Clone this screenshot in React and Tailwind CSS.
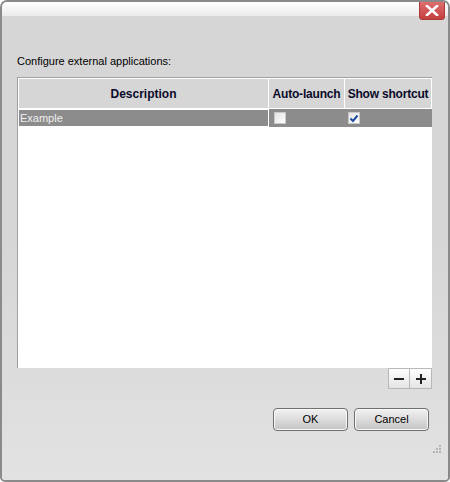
import { useState } from 'react';

const CheckBox = ({ checked }) => (
  <div className="w-[12px] h-[12px] border border-[#c8c8c8] bg-gradient-to-br from-[#e4e4e4] to-white flex items-center justify-center">
    {checked && (
      <svg width="10" height="9" viewBox="0 0 10 9">
        <path d="M1.5 4.5 L4 7 L8.5 1.5" fill="none" stroke="#1a4f9c" strokeWidth="2" />
      </svg>
    )}
  </div>
);

const App = () => {
  const [rows] = useState([{ name: 'Example', auto: false, shortcut: true }]);

  return (
    <div className="w-[450px] h-[482px] bg-white" style={{ fontFamily: '"Liberation Sans", Arial, sans-serif' }}>
      <div className="relative w-full h-full border-2 border-[#8a8a8a] rounded-t-[7px] rounded-b-[5px] overflow-hidden bg-[#d6d6d6] flex flex-col">
        {/* Title bar */}
        <div className="h-[14px] bg-gradient-to-b from-white to-[#ebebeb] shrink-0" />

        {/* Close button */}
        <div className="absolute top-[-2px] right-[3px] w-[26px] h-[20px] bg-gradient-to-b from-[#e07070] to-[#c43e3e] rounded-bl-[3px] rounded-br-[3px] flex items-center justify-center border border-[#a83a3a]">
          <svg width="14" height="11" viewBox="0 0 14 11">
            <path d="M2 1 L12 10 M12 1 L2 10" stroke="#ffffff" strokeWidth="2.6" strokeLinecap="square" />
          </svg>
        </div>

        <div className="flex-1 flex flex-col pl-[15px] pr-[16px] bg-gradient-to-b from-[#d6d6d6] via-[#d6d6d6] to-[#e2e2e2]">
          <div className="mt-[39px] text-[11px] text-black leading-[13px]">Configure external applications:</div>

          {/* Table */}
          <div className="mt-[9px] h-[291px] bg-white border-t border-l border-[#a0a0a0]">
            <div className="flex h-[31px] bg-[#d6d6d6] text-[12px] font-bold text-[#0a0a2a]">
              <div className="w-[251px] border border-white flex items-center justify-center">Description</div>
              <div className="w-[76px] border border-white border-l-0 flex items-center justify-center tracking-[-0.2px]">Auto-launch</div>
              <div className="w-[87px] border border-white border-l-0 flex items-center justify-center tracking-[-0.2px]">Show shortcut</div>
            </div>
            {rows.map((r) => (
              <div key={r.name} className="flex h-[18px] bg-[#8c8c8c] text-[11px]">
                <div className="w-[251px] border border-white text-[#f0f0f0] pl-[1px] leading-[16px]">{r.name}</div>
                <div className="w-[76px] flex items-center pl-[5px]">
                  <CheckBox checked={r.auto} />
                </div>
                <div className="w-[87px] flex items-center pl-[3px]">
                  <CheckBox checked={r.shortcut} />
                </div>
              </div>
            ))}
          </div>

          {/* +/- buttons */}
          <div className="flex justify-end">
            <button className="w-[22px] h-[21px] bg-gradient-to-b from-white to-[#e4e4e4] border border-[#b8b8b8] flex items-center justify-center">
              <svg width="12" height="12" viewBox="0 0 12 12"><path d="M1 6 H11" stroke="#222" strokeWidth="2" /></svg>
            </button>
            <button className="w-[22px] h-[21px] bg-gradient-to-b from-white to-[#e4e4e4] border border-[#b8b8b8] border-l-0 flex items-center justify-center">
              <svg width="12" height="12" viewBox="0 0 12 12"><path d="M1 6 H11 M6 1 V11" stroke="#222" strokeWidth="2" /></svg>
            </button>
          </div>

          {/* OK / Cancel */}
          <div className="flex justify-end gap-[6px] mt-[19px] pr-[3px]">
            <button className="w-[75px] h-[23px] rounded-[4px] border border-[#707070] bg-gradient-to-b from-[#f2f2f2] via-[#dcdcdc] to-[#c4c4c4] text-[11px] text-black shadow-[inset_0_0_0_1px_#f8f8f8]">OK</button>
            <button className="w-[75px] h-[23px] rounded-[4px] border border-[#707070] bg-gradient-to-b from-[#f2f2f2] via-[#dcdcdc] to-[#c4c4c4] text-[11px] text-black shadow-[inset_0_0_0_1px_#f8f8f8]">Cancel</button>
          </div>
        </div>

        {/* Resize grip */}
        <svg className="absolute right-[6px] bottom-[24px]" width="12" height="12" viewBox="0 0 12 12">
          <g fill="#b4b4b4">
            <rect x="9" y="1" width="2" height="2" />
            <rect x="6" y="4" width="2" height="2" />
            <rect x="9" y="4" width="2" height="2" />
            <rect x="3" y="7" width="2" height="2" />
            <rect x="6" y="7" width="2" height="2" />
            <rect x="9" y="7" width="2" height="2" />
          </g>
        </svg>
      </div>
    </div>
  );
};

export default App;
